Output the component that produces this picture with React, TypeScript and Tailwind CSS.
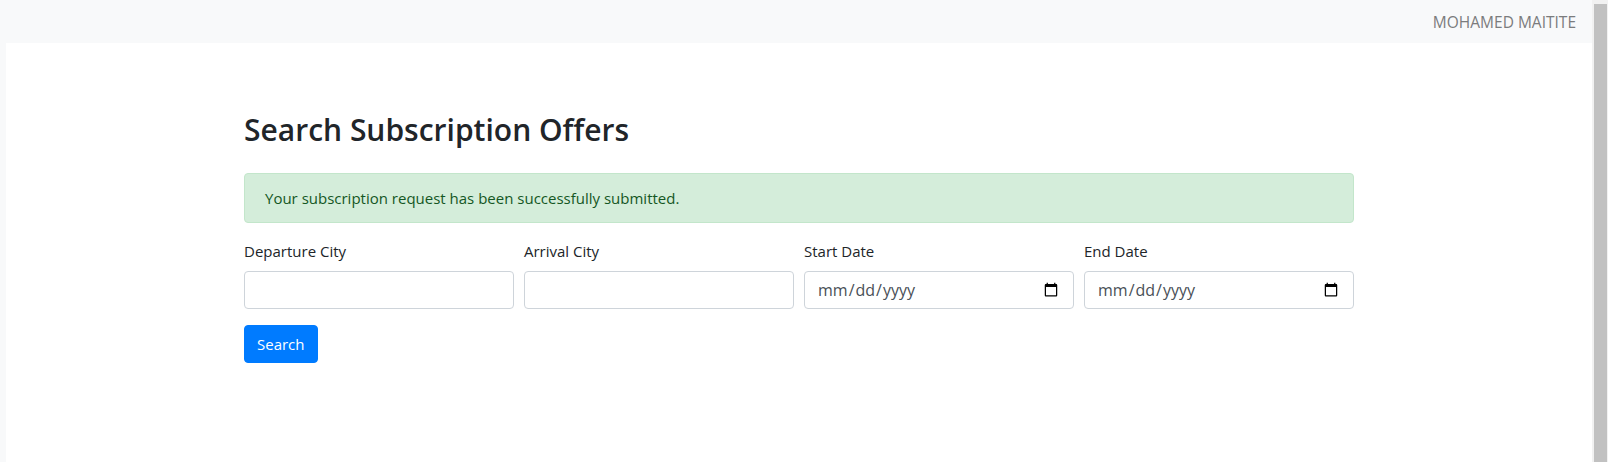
import React from "react";

const fields = [
  { label: "Departure City", type: "text" },
  { label: "Arrival City", type: "text" },
  { label: "Start Date", type: "date" },
  { label: "End Date", type: "date" },
];

export default function App() {
  return (
    <div className="flex h-[462px] overflow-hidden bg-white font-['Open_Sans',sans-serif] text-[#212529]">
      {/* ---------- Page ---------- */}
      <div className="flex flex-1 flex-col bg-[#f8f9fa]">
        <header className="flex h-[43px] items-center justify-end px-4">
          <span className="text-[15.5px] leading-6 text-[#7b7c7d]">MOHAMED MAITITE</span>
        </header>

        <main className="ml-[6px] flex-1 bg-white">
          <div className="mx-auto w-[1140px] px-[15px] pt-[68px]">
            <h2 className="mb-[24px] text-[30px] font-semibold leading-[38px]">
              Search Subscription Offers
            </h2>

            <div className="mb-4 h-[50px] rounded border border-[#c3e6cb] bg-[#d4edda] px-5 py-3 text-[15px] leading-6 text-[#155724]">
              Your subscription request has been successfully submitted.
            </div>

            <form className="flex flex-col">
              <div className="mb-4 grid grid-cols-4 gap-[10px]">
                {fields.map((f) => (
                  <div key={f.label} className="flex flex-col">
                    <label className="mb-2 text-[15px] leading-6">{f.label}</label>
                    <input
                      type={f.type}
                      className="h-[38px] w-full rounded border border-[#ced4da] bg-white px-3 text-[16px] text-[#495057] outline-none"
                    />
                  </div>
                ))}
              </div>
              <div>
                <button
                  type="button"
                  className="h-[38px] rounded border border-[#007bff] bg-[#007bff] px-3 text-[15px] leading-6 text-white"
                >
                  Search
                </button>
              </div>
            </form>
          </div>
        </main>
      </div>

      {/* ---------- Scrollbar ---------- */}
      <div className="flex w-[16px] flex-col bg-[#f1f1f1] pl-[2px] pr-[1px] pt-[4px]">
        <div className="flex-1 bg-[#c1c1c1]" />
      </div>
    </div>
  );
}
